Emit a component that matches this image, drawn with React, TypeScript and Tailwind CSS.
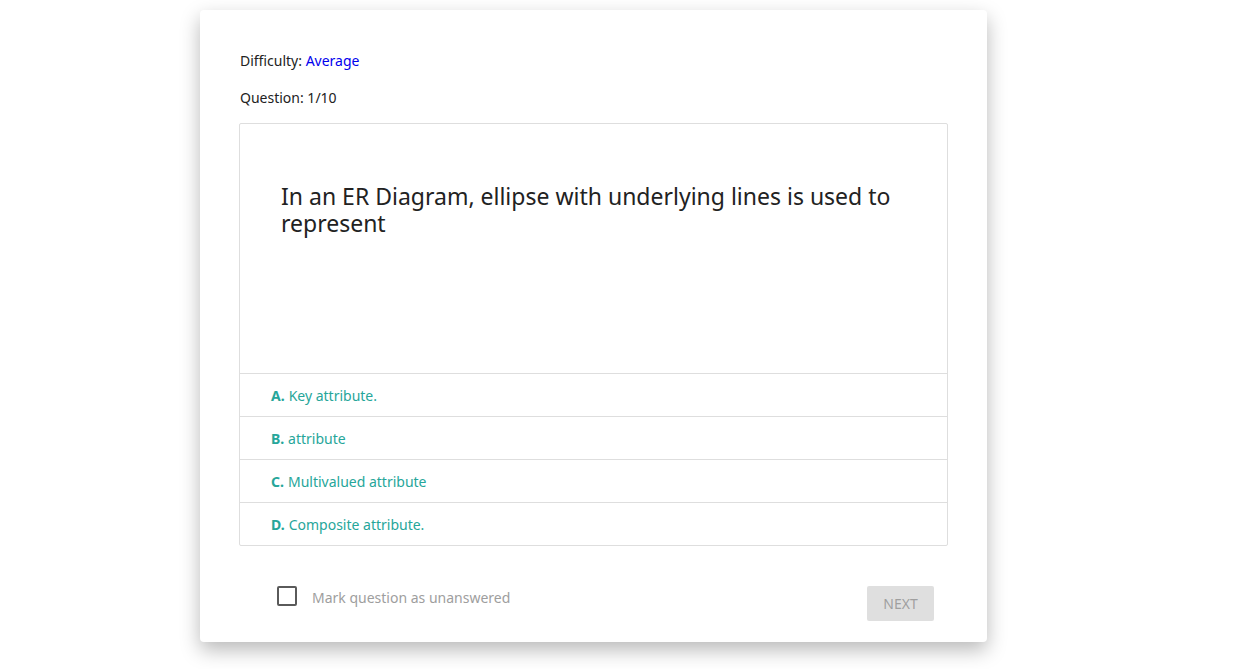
import { useState } from 'react';

const options = [
  { key: 'A', text: 'Key attribute.' },
  { key: 'B', text: 'attribute' },
  { key: 'C', text: 'Multivalued attribute' },
  { key: 'D', text: 'Composite attribute.' },
];

export default function App() {
  const [marked, setMarked] = useState(false);

  return (
    <div className="min-h-screen bg-white pt-[10px] pb-[27px]" style={{ fontFamily: '"Noto Sans", "Open Sans", sans-serif' }}>
      <div className="ml-[200px] w-[787px] bg-white rounded-[4px] shadow-[0_8px_20px_rgba(0,0,0,0.28)] px-[39px] pt-[41px] pb-[21px]">
        <div className="pl-[1px] text-[14px] leading-[20px] text-[#222]">
          Difficulty: <span className="text-[#0000ee]">Average</span>
        </div>
        <div className="pl-[1px] text-[14px] leading-[20px] text-[#222] mt-[17px]">Question: 1/10</div>

        <div className="mt-[15px] border border-[#dedede] rounded-[2px]">
          <div className="h-[249px] px-[41px] pt-[59px]">
            <p className="text-[23px] leading-[27px] text-[#222]">
              In an ER Diagram, ellipse with underlying lines is used to represent
            </p>
          </div>
          {options.map(o => (
            <div key={o.key} className="h-[43px] border-t border-[#dedede] flex items-center pl-[31px] text-[14px] text-[#26a69a] cursor-pointer">
              <span className="font-bold mr-[4px]">{o.key}.</span>
              {o.text}
            </div>
          ))}
        </div>

        <div className="mt-[40px] flex items-start justify-between pl-[38px] pr-[14px]">
          <label className="flex items-start cursor-pointer" onClick={() => setMarked(!marked)}>
            <span className={`w-[20px] h-[20px] border-2 border-[#5a5a5a] rounded-[2px] ${marked ? 'bg-[#26a69a]' : ''}`} />
            <span className="ml-[15px] mt-[2px] text-[14px] leading-[20px] text-[#9e9e9e]">Mark question as unanswered</span>
          </label>
          <button className="w-[67px] h-[35px] bg-[#dfdfdf] rounded-[2px] text-[14px] text-[#9f9f9f] uppercase">Next</button>
        </div>
      </div>
    </div>
  );
}
